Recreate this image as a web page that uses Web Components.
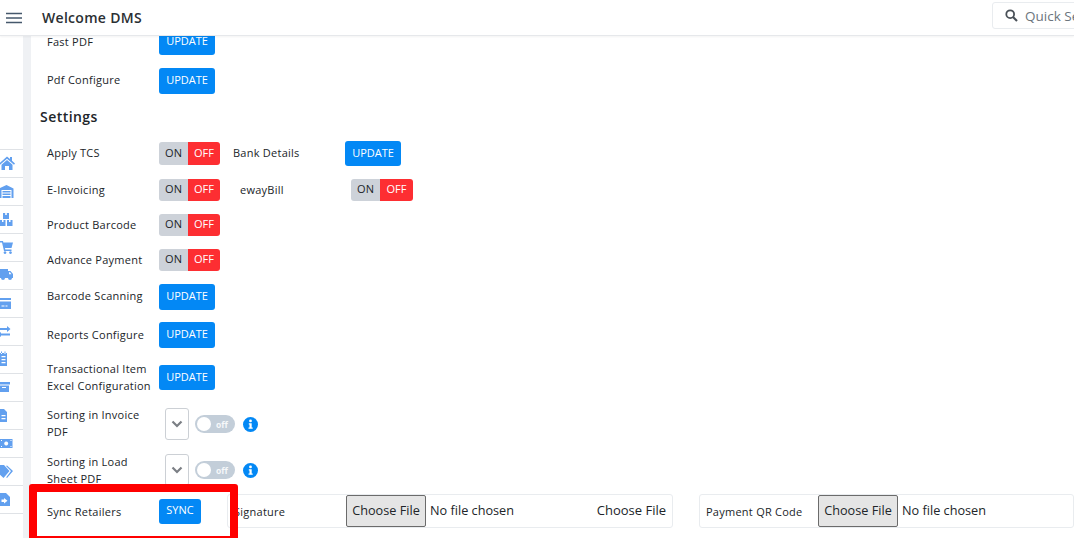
<!DOCTYPE html>
<html>
<head>
<meta charset="utf-8">
<title>Welcome DMS</title>
<style>
	html, body { margin: 0; height: 100%; overflow: hidden; background: #fff; }
	body { font-family: "Open Sans", sans-serif; color: #212529; }
</style>
</head>
<body>
<dms-app>
	<dms-header slot="header" title-text="Welcome DMS"></dms-header>
	<dms-sidebar slot="side"></dms-sidebar>

	<dms-row label="Fast PDF" style="--h:26px;--top:-7px"><dms-button>UPDATE</dms-button></dms-row>
	<dms-row label="Pdf Configure" style="--h:26px;--top:13px;--lift:4px"><dms-button>UPDATE</dms-button></dms-row>
	<dms-heading style="--top:13px">Settings</dms-heading>
	<dms-row label="Apply TCS" style="--h:23px;--top:15px">
		<dms-toggle></dms-toggle>
		<dms-row label="Bank Details" style="--h:25px;--top:0px;--w:112px;--left:13px"><dms-button style="--pb:2px">UPDATE</dms-button></dms-row>
	</dms-row>
	<dms-row label="E-Invoicing" style="--h:22px;--top:14px">
		<dms-toggle></dms-toggle>
		<dms-row label="ewayBill" style="--h:22px;--top:0px;--w:111px;--left:20px"><dms-toggle style="--ow:33px"></dms-toggle></dms-row>
	</dms-row>
	<dms-row label="Product Barcode" style="--h:22px;--top:13px"><dms-toggle></dms-toggle></dms-row>
	<dms-row label="Advance Payment" style="--h:22px;--top:13px"><dms-toggle></dms-toggle></dms-row>
	<dms-row label="Barcode Scanning" style="--h:26px;--top:13px;--lift:4px"><dms-button>UPDATE</dms-button></dms-row>
	<dms-row label="Reports Configure" style="--h:26px;--top:12px"><dms-button>UPDATE</dms-button></dms-row>
	<dms-row label="Transactional Item Excel Configuration" style="--h:25px;--top:17px"><dms-button style="--pb:2px">UPDATE</dms-button></dms-row>
	<dms-row label="Sorting in Invoice PDF" style="--h:32px;--top:18px"><dms-sort></dms-sort></dms-row>
	<dms-row label="Sorting in Load Sheet PDF" style="--h:32px;--top:14px;--lift:1px"><dms-sort></dms-sort></dms-row>
	<dms-files style="--top:8px">
		<dms-row label="Sync Retailers" style="--h:34px;--top:0px;--w:112px;--lift:0px"><dms-button style="--bw:42px;--bh:25px">SYNC</dms-button></dms-row>
		<dms-file-card label="Signature" extra style="--cw:446px;--lw:112px;--ml:26px"></dms-file-card>
		<dms-file-card label="Payment QR Code" style="--cw:375px;--lw:112px;--ml:26px"></dms-file-card>
	</dms-files>
	<dms-highlight slot="over"></dms-highlight>
</dms-app>

<script>
const define = (name, css, html, setup) => {
	customElements.define(name, class extends HTMLElement {
		constructor() {
			super();
			this.attachShadow({ mode: "open" }).innerHTML = `<style>${css}</style>${typeof html === "function" ? html(this) : html}`;
		}
		connectedCallback() {
			if (setup) setup(this);
		}
	});
};

define("dms-app", `
	:host { display: block; position: relative; width: 1074px; height: 538px; overflow: hidden; }
	.body { display: flex; height: 502px; }
	.strip { width: 8px; background: #eff1f4; flex: none; }
	main { flex: 1; min-width: 0; overflow: hidden; }
`, `
	<slot name="header"></slot>
	<div class="body">
		<slot name="side"></slot>
		<div class="strip"></div>
		<main><slot></slot></main>
	</div>
	<slot name="over"></slot>
`);

define("dms-header", `
	:host { display: flex; align-items: center; height: 35px; border-bottom: 1px solid #e6e8eb; box-shadow: 0 1px 2px rgba(0,0,0,.05); position: relative; z-index: 2; background: #fff; }
	svg { margin-left: 6px; flex: none; }
	h1 { margin: 0 0 0 20px; font: 600 14px "Open Sans", sans-serif; letter-spacing: .3px; color: #2b2f33; flex: 1; }
	.search { display: flex; align-items: center; flex: none; box-sizing: border-box; width: 120px; height: 27px; margin: -5px -38px 0 0; border: 1px solid #e9ecef; border-radius: 3px; padding: 2px 0 0 12px; font-size: 13.500px; color: #6c757d; white-space: nowrap; }
	.search svg { margin: -2px 7px 0 0; }
`, (el) => `
	<svg width="16" height="12" viewBox="0 0 16 12"><path d="M0 1.500h16M0 6h16M0 10.500h16" stroke="#46586c" stroke-width="1.500"/></svg>
	<h1>${el.getAttribute("title-text")}</h1>
	<div class="search">
		<svg width="13" height="13" viewBox="0 0 13 13"><circle cx="5.200" cy="5.200" r="3.900" fill="none" stroke="#495057" stroke-width="1.800"/><path d="M8 8l4 4" stroke="#495057" stroke-width="2.200"/></svg>
		<span>Quick Search</span>
	</div>
`);

// sidebar icons, drawn in cell coordinates and clipped by the left edge
const sideIcons = [
	// home
	"M-1 14.500L7 7.500l3 2.600V8h2v3.800l3 2.700-1 1.200-7-6-7 6zM1.500 15.700L7 11l5.500 4.700V21H9v-4H5v4H1.500z",
	// warehouse
	"M-1 11.500L6.500 8l7 3.500V21h-2v-8h-10v8H-1zM2.500 14h8v1.500h-8zM2.500 16.500h8V18h-8zM2.500 19h8v2h-8z",
	// boxes
	"M3 8h2.200v2h1.600V8H9v6H3zM0 15h2v2h1.500v-2h2v6H0zM7 15h2v2h1.500v-2H12.500v6H7z",
	// cart
	"M0 8h3l.4 1.500H13L11.500 15H5l.3 1.500h6.200V18H4L2 9.500H0zM5 18.200a1.400 1.400 0 1 0 .01 0zM10.500 18.200a1.400 1.400 0 1 0 .01 0z",
	// truck
	"M0 8h8v2h2.500l2.500 3v4h-1a2 2 0 0 1-4 0H5a2 2 0 0 1-4 0H0zM9 11.200v2h2.500l-1.500-2z",
	// card
	"M0 9h11v2H0zM0 12.500h11V20H0zM1.500 16.500h3v1h-3zM5.500 16.500h2v1h-2z",
	// exchange
	"M0 11h7V9l3.500 3-3.500 3v-2H0zM1 16.500h9v2H1zM1 15v5l-3-2.500z",
	// list
	"M0 8h7v13H0zM1 6.500h1V9H1zM4.500 6.500h1V9h-1zM1.500 11h4v1.200h-4zM1.500 14h4v1.200h-4zM1.500 17h4v1.200h-4z",
	// archive
	"M0 9h10v2.500H0zM0 12.500h9V19H0zM2 14v1h4v-1z",
	// file
	"M0 8h4l3 3v10H0zM1.500 14h4v1.200h-4zM1.500 17h4v1.200h-4z",
	// money
	"M0 10h12.500v9H0zM6.200 12.500a2 2 0 1 0 .01 0zM1 11h1v1H1zM10.500 11h1v1h-1zM1 17h1v1H1zM10.500 17h1v1h-1z",
	// tags
	"M-3 8h7l5.500 6-6 7-6.500-6zM7 8.500l6 5.500-6 7-.8-.8L11 14 6 9z",
	// file import
	"M0 8h6l4 4v9H0zM1.500 14.500H4V13l3.500 2.800L4 18.500V17H1.500z"
];
define("dms-sidebar", `
	:host { display: flex; flex-direction: column; width: 23px; flex: none; padding-top: 113px; box-sizing: border-box; }
	div { height: 28.100px; box-sizing: border-box; border-top: 1px solid #dfe2e6; }
	svg { display: block; }
`, sideIcons.map((d) => `<div><svg width="23" height="27" viewBox="0 1 23 27"><path fill="#62a0ef" fill-rule="evenodd" d="${d}"/></svg></div>`).join("") + `<div></div>`);

define("dms-row", `
	:host { display: flex; align-items: center; height: var(--h, 26px); margin: var(--top, 0) 0 0 var(--left, 0); font-size: 11px; letter-spacing: .25px; color: #212529; }
	.label { flex: none; width: var(--w, 112px); line-height: 17px; box-sizing: border-box; padding-bottom: var(--lift, 2px); }
`, (el) => `<div class="label">${el.getAttribute("label")}</div><slot></slot>`, (el) => {
	if (el.parentElement.tagName !== "DMS-ROW" && el.parentElement.tagName !== "DMS-FILES") el.style.paddingLeft = "16px";
});

define("dms-heading", `
	:host { display: block; margin: var(--top, 0) 0 0 9px; font-size: 14px; font-weight: 600; letter-spacing: .45px; line-height: 20px; color: #212529; }
`, `<slot></slot>`);

define("dms-button", `
	:host { display: flex; align-items: center; justify-content: center; box-sizing: border-box; width: var(--bw, 56px); height: var(--bh, 100%); max-height: 26px; background: #0388f5; color: #fff; border-radius: 3px; font-size: 11px; font-weight: 500; letter-spacing: 0; flex: none; padding-bottom: var(--pb, 4px); }
`, `<slot></slot>`);

define("dms-toggle", `
	:host { display: flex; height: 100%; flex: none; border-radius: 3px; overflow: hidden; font-size: 11px; letter-spacing: 0; text-align: center; }
	span { display: flex; align-items: center; justify-content: center; padding-bottom: 3px; box-sizing: border-box; }
	.on { width: 29px; background: #cdd2d9; color: #212529; }
	.off { width: var(--ow, 32px); background: #fd2e32; color: #fff; font-weight: 500; }
`, `<span class="on">ON</span><span class="off">OFF</span>`);

define("dms-sort", `
	:host { display: flex; align-items: center; height: 100%; margin-left: 6px; }
	.select { display: flex; align-items: center; justify-content: center; box-sizing: border-box; width: 24px; height: 100%; border: 1px solid #ccd0d5; border-radius: 3px; flex: none; }
	.switch { display: flex; align-items: center; box-sizing: border-box; margin-left: 6px; width: 40px; height: 18px; border-radius: 9px; background: #c3ced9; padding-left: 2px; color: #f6f8fa; font: 700 8.500px "Open Sans", sans-serif; letter-spacing: 0; }
	.knob { width: 14px; height: 14px; border-radius: 50%; background: #fff; margin-right: 5px; flex: none; }
	.info { margin-left: 8px; flex: none; display: block; }
`, `
	<div class="select"><svg width="12" height="8" viewBox="0 0 12 8"><path d="M1.500 1.500L6 6l4.500-4.500" fill="none" stroke="#7b7f85" stroke-width="2.200"/></svg></div>
	<div class="switch"><span class="knob"></span>off</div>
	<svg class="info" width="15" height="15" viewBox="0 0 15 15"><circle cx="7.500" cy="7.500" r="7.500" fill="#0388f5"/><circle cx="7.500" cy="3.900" r="1.400" fill="#fff"/><path d="M5.800 6.200h2.900v4.300h1v1.300H5.500v-1.300h1v-3h-.7z" fill="#fff"/></svg>
`);

define("dms-files", `
	:host { display: flex; align-items: center; height: 34px; margin-top: var(--top, 0); padding-left: 16px; }
`, `<slot></slot>`);

define("dms-file-card", `
	:host { display: flex; align-items: center; flex: none; box-sizing: border-box; width: var(--cw); height: 34px; margin-left: var(--ml, 0); padding-left: 6px; border: 1px solid #e9ecef; border-radius: 3px; font-size: 12.700px; color: #212529; }
	.label { width: var(--lw); flex: none; font-size: 11px; letter-spacing: .25px; padding-top: 1px; }
	.btn { box-sizing: border-box; width: 80px; height: 32px; flex: none; display: flex; align-items: center; justify-content: center; background: #e5e5e5; border: 1px solid #6b6b6b; border-radius: 2px; padding-bottom: 3px; }
	.none { margin-left: 4px; padding-bottom: 3px; }
	.extra { margin-left: auto; margin-right: 6px; padding-bottom: 3px; font-size: 13px; }
`, (el) => `
	<span class="label">${el.getAttribute("label")}</span>
	<span class="btn">Choose File</span>
	<span class="none">No file chosen</span>
	${el.hasAttribute("extra") ? `<span class="extra">Choose File</span>` : ""}
`);

define("dms-highlight", `
	:host { position: absolute; left: 29px; top: 484px; width: 209px; height: 60px; box-sizing: border-box; border: 8px solid #f00; border-radius: 3px; z-index: 3; }
`, ``);
</script>
</body>
</html>
